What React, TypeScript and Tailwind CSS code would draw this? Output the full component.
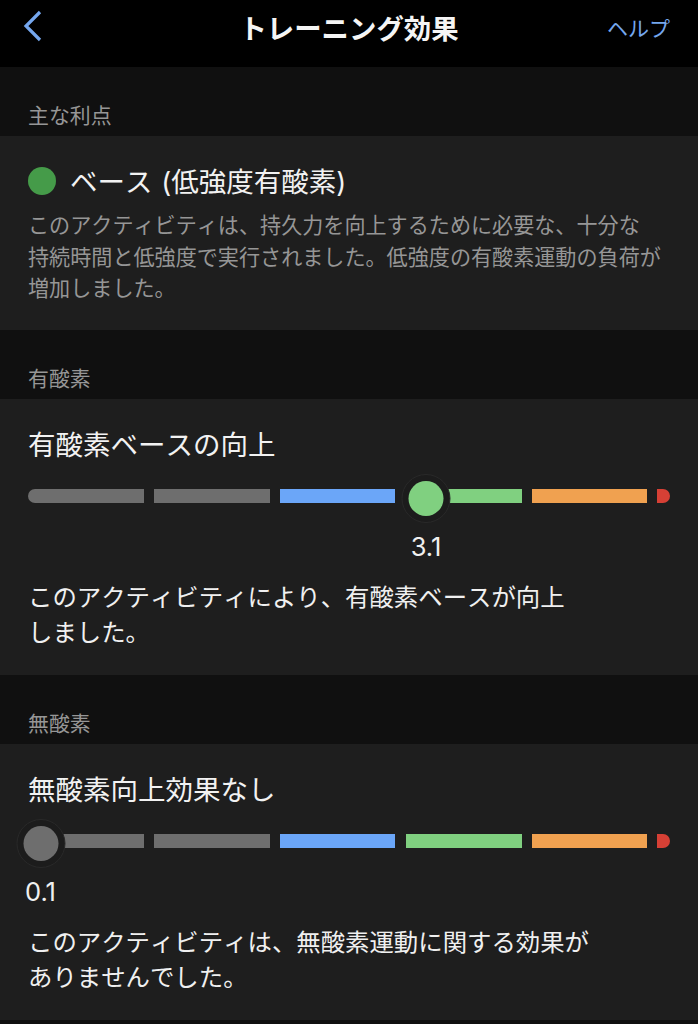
const segments = [
  'bg-[#6e6e6e] w-[116px] rounded-l-full',
  'bg-[#6e6e6e] w-[115.5px]',
  'bg-[#6ba6f8] w-[115.5px]',
  'bg-[#80d080] w-[116px]',
  'bg-[#f0a150] w-[115.5px]',
  'bg-[#d64035] w-[13px] rounded-r-full',
]

interface GaugeProps {
  value: string
  // center of the knob, measured from the start of the bar
  offset: number
  knobClass: string
}

function Gauge({ value, offset, knobClass }: GaugeProps) {
  return (
    <div className="relative h-[14px]">
      <div className="flex h-full gap-[10.2px]">
        {segments.map((segment, i) => (
          <div key={i} className={`h-full shrink-0 ${segment}`} />
        ))}
      </div>
      <div
        className="absolute top-[-15.5px] w-[49px] -translate-x-1/2 flex flex-col items-center"
        style={{ left: offset }}
      >
        <div className="w-[49px] h-[49px] rounded-full border border-[#292929] bg-[#1c1c1c] flex items-center justify-center">
          <div className={`w-[35px] h-[35px] rounded-full ${knobClass}`} />
        </div>
        <div className="mt-[8.5px] text-[25.5px] leading-[32px] [font-kerning:normal] text-[#f0f0f0]">{value}</div>
      </div>
    </div>
  )
}

function SectionLabel({ children }: { children: string }) {
  return (
    <h2 className="h-[69px] px-7 pt-[33px] text-[20.9px] leading-[32px] text-[#969696]">
      {children}
    </h2>
  )
}

interface EffectCardProps extends GaugeProps {
  title: string
  lines: string[]
}

function EffectCard({ title, lines, ...gauge }: EffectCardProps) {
  return (
    <section className="h-[276px] px-7 pt-[26px] bg-[#1e1e1e]">
      <h3 className="h-[64.5px] text-[27.5px] leading-[40px] text-[#f2f2f2]">{title}</h3>
      <Gauge {...gauge} />
      <p className="mt-[76.5px] text-[24.4px] leading-[35px] text-[#f0f0f0]">
        {lines.map((line) => (
          <span key={line} className="block">{line}</span>
        ))}
      </p>
    </section>
  )
}

export default function App() {
  return (
    <div className="h-[1024px] overflow-hidden bg-[#101010] whitespace-nowrap [font-kerning:none] font-['Inter','Noto_Sans_CJK_JP',sans-serif]">
      {/* Header */}
      <header className="h-[66.5px] px-7 pb-[9px] grid grid-cols-[1fr_auto_1fr] items-center bg-black">
        <svg className="w-[20px] h-[32px] -ml-[6px] -mt-[5px]" viewBox="0 0 20 32" fill="none" stroke="#75a7ee" strokeWidth="3.2">
          <path d="M18 2L4 16L18 30" />
        </svg>
        <h1 className="mt-[2px] text-[27.4px] font-bold text-[#f5f5f5]">トレーニング効果</h1>
        <button className="justify-self-end text-[21px] text-[#75a7ee]">ヘルプ</button>
      </header>

      {/* Primary benefit */}
      <SectionLabel>主な利点</SectionLabel>
      <section className="h-[194px] px-7 pt-[25.5px] bg-[#1e1e1e]">
        <div className="flex items-center gap-[14px] h-[40px]">
          <div className="w-[28px] h-[28px] rounded-full bg-[#459b49]" />
          <h3 className="mt-[2px] text-[27.5px] leading-[40px] [word-spacing:1px] text-[#f2f2f2]">ベース (低強度有酸素)</h3>
        </div>
        <p className="mt-[9px] text-[21.1px] leading-[31.5px] text-[#969696]">
          このアクティビティは、持久力を向上するために必要な、十分な<br />
          持続時間と低強度で実行されました。低強度の有酸素運動の負荷が<br />
          増加しました。
        </p>
      </section>

      {/* Aerobic */}
      <SectionLabel>有酸素</SectionLabel>
      <EffectCard
        title="有酸素ベースの向上"
        value="3.1"
        offset={398}
        knobClass="bg-[#80d080]"
        lines={['このアクティビティにより、有酸素ベースが向上', 'しました。']}
      />

      {/* Anaerobic */}
      <SectionLabel>無酸素</SectionLabel>
      <EffectCard
        title="無酸素向上効果なし"
        value="0.1"
        offset={12.5}
        knobClass="bg-[#6e6e6e]"
        lines={['このアクティビティは、無酸素運動に関する効果が', 'ありませんでした。']}
      />
    </div>
  )
}
